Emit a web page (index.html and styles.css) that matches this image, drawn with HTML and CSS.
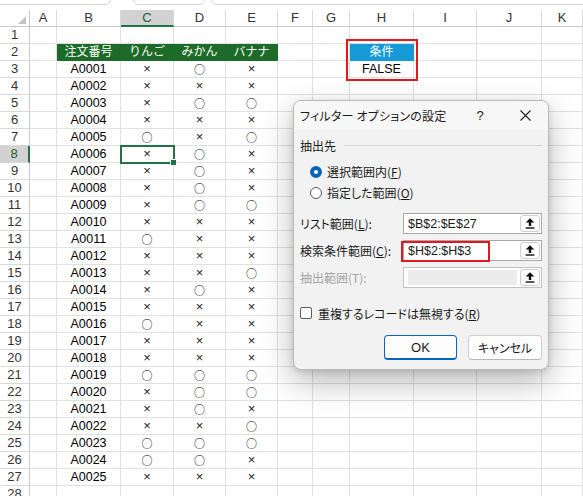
FILE: index.html
```html
<!DOCTYPE html>
<html lang="ja">
<head>
    <meta charset="UTF-8">
    <meta name="viewport" content="width=device-width, initial-scale=1.0">
    <title>フィルター オプションの設定</title>
    <link rel="stylesheet" href="styles.css">
</head>
<body>
<div class="app">

    <div class="topbar">
        <div class="box box-name"></div>
        <div class="box box-fx"></div>
        <div class="box box-formula"></div>
    </div>

    <div class="sheet" id="sheet"></div>

    <!-- 条件範囲の赤枠 -->
    <div class="criteria-mark"></div>
    <!-- 選択セル C8 -->
    <div class="selection"><span class="handle"></span></div>

    <div class="dialog">
        <div class="dlg-title">
            <span class="dlg-caption">フィルター オプションの設定</span>
            <span class="dlg-help">?</span>
            <span class="dlg-close">
                <svg width="11" height="11" viewBox="0 0 11 11"><path d="M0.5 0.5 L10.5 10.5 M10.5 0.5 L0.5 10.5" stroke="#222" stroke-width="1.1" fill="none"/></svg>
            </span>
        </div>

        <div class="dlg-body">
            <div class="group-head"><span>抽出先</span><span class="rule"></span></div>

            <div class="radios">
                <div class="radio-row"><span class="radio on"></span>選択範囲内(<u>F</u>)</div>
                <div class="radio-row"><span class="radio"></span>指定した範囲(<u>O</u>)</div>
            </div>

            <div class="fields">
                <div class="field-row">
                    <span class="field-label">リスト範囲(<u>L</u>):</span>
                    <div class="field">
                        <span class="field-text">$B$2:$E$27</span>
                        <span class="ref-btn">
                            <svg width="10" height="11" viewBox="0 0 10 11"><path d="M5 0.3 L9.3 4.6 H6.2 V8 H3.8 V4.6 H0.7 Z" fill="#111"/><rect x="0.6" y="9.3" width="8.8" height="1.4" fill="#111"/></svg>
                        </span>
                    </div>
                </div>
                <div class="field-row">
                    <span class="field-label">検索条件範囲(<u>C</u>):</span>
                    <div class="field">
                        <span class="field-text">$H$2:$H$3</span>
                        <span class="red-mark"></span>
                        <span class="ref-btn">
                            <svg width="10" height="11" viewBox="0 0 10 11"><path d="M5 0.3 L9.3 4.6 H6.2 V8 H3.8 V4.6 H0.7 Z" fill="#111"/><rect x="0.6" y="9.3" width="8.8" height="1.4" fill="#111"/></svg>
                        </span>
                    </div>
                </div>
                <div class="field-row disabled">
                    <span class="field-label">抽出範囲(T):</span>
                    <div class="field">
                        <span class="field-fill"></span>
                        <span class="ref-btn">
                            <svg width="10" height="11" viewBox="0 0 10 11"><path d="M5 0.3 L9.3 4.6 H6.2 V8 H3.8 V4.6 H0.7 Z" fill="#111"/><rect x="0.6" y="9.3" width="8.8" height="1.4" fill="#111"/></svg>
                        </span>
                    </div>
                </div>
            </div>

            <div class="check-row"><span class="check"></span>重複するレコードは無視する(<u>R</u>)</div>

            <div class="buttons">
                <button type="button" class="btn btn-ok">OK</button>
                <button type="button" class="btn">キャンセル</button>
            </div>
        </div>
    </div>

</div>

<script>
    const sheet = document.getElementById("sheet");
    const letters = ["", "A", "B", "C", "D", "E", "F", "G", "H", "I", "J", "K"];

    // りんご, みかん, バナナ  (o = ○, x = ×)
    const data = [
        "xox", "xxx", "xoo", "xxx", "oxo", "xox", "xox", "xox", "xoo", "xxx",
        "oxx", "xxx", "xxo", "xox", "xxx", "oxx", "xxx", "xxx", "ooo", "xoo",
        "xox", "xxo", "ooo", "oox", "xxx"
    ];
    const heads = ["注文番号", "りんご", "みかん", "バナナ"];

    function cell(text, cls) {
        const d = document.createElement("div");
        d.className = cls;
        d.textContent = text;
        sheet.appendChild(d);
    }

    letters.forEach((l, i) => {
        if (i == 0) {
            cell("", "corner");
        } else {
            cell(l, l == "C" ? "col-head active" : "col-head");
        }
    });

    for (let r = 1; r <= 28; r++) {
        cell(r, r == 8 ? "row-head active" : "row-head");
        for (let c = 1; c <= 11; c++) {
            let text = "";
            let cls = "cell";
            if (r == 2 && c >= 2 && c <= 5) {
                text = heads[c - 2];
                cls += " th";
            } else if (r >= 3 && r <= 27 && c == 2) {
                text = "A" + String(r - 2).padStart(4, "0");
                cls += " center";
            } else if (r >= 3 && r <= 27 && c >= 3 && c <= 5) {
                const m = data[r - 3][c - 3];
                text = m == "o" ? "○" : "×";
                cls += m == "o" ? " center maru" : " center batsu";
            } else if (r == 2 && c == 8) {
                text = "条件";
                cls += " cond";
            } else if (r == 3 && c == 8) {
                text = "FALSE";
                cls += " center";
            }
            cell(text, cls);
        }
    }
</script>
</body>
</html>
```

FILE: styles.css
```css
html, body {
    margin: 0;
    padding: 0;
}

body {
    background-color: #fff;
    font-family: "Liberation Sans", "Noto Sans CJK JP", sans-serif;
    color: #000;
}

.app {
    position: relative;
    width: 583px;
    height: 496px;
    overflow: hidden;
}

/* 上部の数式バー (一部のみ見える) */
.topbar {
    height: 10px;
    overflow: hidden;
    display: flex;
    gap: 22px;
    margin-left: -10px;
}

.box {
    height: 12px;
    margin-top: -9px;
    border: 1px solid #d6d6d6;
    border-radius: 5px;
    background-color: #fff;
}

.box-name {
    width: 119px;
}

.box-fx {
    width: 70px;
}

.box-formula {
    flex: 1;
    margin-left: -16px;
    margin-right: -10px;
}

/* シート */
.sheet {
    display: grid;
    grid-template-columns: 30px 27px 64px 53px 52px 52px 35px 37px 64px 63px 65px 41px;
    grid-auto-rows: 17px;
    font-size: 12.5px;
}

.sheet div {
    box-sizing: border-box;
    border-right: 1px solid #e1e1e1;
    border-bottom: 1px solid #e1e1e1;
    line-height: 16px;
    white-space: nowrap;
    overflow: hidden;
}

.corner {
    position: relative;
    border-right: 1px solid #c8c8c8 !important;
    border-bottom: 1px solid #c8c8c8 !important;
}

.corner::after {
    content: "";
    position: absolute;
    right: 3px;
    bottom: 2px;
    border-left: 8px solid transparent;
    border-bottom: 8px solid #c4c4c4;
}

.col-head {
    text-align: center;
    color: #333;
    font-size: 13px;
    border-right: 1px solid #d9d9d9 !important;
    border-bottom: 1px solid #c8c8c8 !important;
}

.col-head.active {
    background-color: #d2d2d2;
    color: #1b5e34;
    border-bottom: 2px solid #217346 !important;
}

.row-head {
    text-align: center;
    color: #333;
    font-size: 13px;
    border-right: 1px solid #c8c8c8 !important;
    border-bottom: 1px solid #d9d9d9 !important;
}

.row-head.active {
    background-color: #d2d2d2;
    color: #1b5e34;
    border-right: 2px solid #217346 !important;
}

.center {
    text-align: center;
}

.th {
    background-color: #1d6b28;
    color: #fff;
    text-align: center;
    font-size: 12px;
    border-right: 1px solid #1d6b28 !important;
    border-bottom: 1px solid #1d6b28 !important;
}

.cond {
    background-color: #159ad6;
    color: #fff;
    text-align: center;
    font-size: 12px;
    border-right: 1px solid #159ad6 !important;
    border-bottom: 1px solid #159ad6 !important;
}

.maru {
    font-family: "Noto Sans CJK JP", sans-serif;
    font-size: 11px;
}

.batsu {
    font-size: 13px;
    color: #222;
}

/* 重なり */
.criteria-mark {
    position: absolute;
    left: 346px;
    top: 39px;
    width: 72px;
    height: 42px;
    box-sizing: border-box;
    border: 2px solid #e5161e;
}

.selection {
    position: absolute;
    left: 120px;
    top: 145px;
    width: 55px;
    height: 19px;
    box-sizing: border-box;
    border: 2px solid #217346;
}

.selection .handle {
    position: absolute;
    right: -4px;
    bottom: -4px;
    width: 5px;
    height: 5px;
    background-color: #217346;
    border: 1px solid #fff;
}

/* ダイアログ */
.dialog {
    position: absolute;
    left: 293px;
    top: 100px;
    width: 256px;
    height: 270px;
    box-sizing: border-box;
    border: 1px solid #b9b9b9;
    border-radius: 8px;
    background-color: #f2f2f2;
    overflow: hidden;
    font-family: "Noto Sans CJK JP", sans-serif;
    font-feature-settings: "palt";
    font-size: 12px;
    color: #1a1a1a;
    box-shadow: 0 12px 32px rgba(0, 0, 0, 0.28), 0 2px 6px rgba(0, 0, 0, 0.12);
}

.dlg-title {
    height: 29px;
    display: flex;
    align-items: center;
    padding-left: 6px;
    background-color: #f7f7f7;
}

.dlg-caption {
    flex: 1;
    letter-spacing: 0.2px;
}

.dlg-help {
    width: 20px;
    text-align: center;
    font-family: "Liberation Sans", sans-serif;
    font-size: 13px;
    margin-right: 30px;
}

.dlg-close {
    width: 11px;
    height: 11px;
    margin-right: 17px;
    display: flex;
}

.dlg-body {
    padding: 0 6px;
}

.group-head {
    display: flex;
    align-items: center;
    gap: 8px;
    height: 16px;
    margin-top: 7px;
}

.group-head .rule {
    flex: 1;
    height: 1px;
    background-color: #d5d5d5;
}

.radios {
    margin-top: 8px;
}

.radio-row {
    display: flex;
    align-items: center;
    height: 21px;
    padding-left: 10px;
}

.radio {
    width: 12px;
    height: 12px;
    box-sizing: border-box;
    border: 1px solid #5a5a5a;
    border-radius: 50%;
    margin-right: 5px;
    background-color: #fff;
}

.radio.on {
    border: 4px solid #0a64be;
    background-color: #fff;
}

u {
    text-decoration: underline;
    text-underline-offset: 1px;
}

.fields {
    margin-top: 10px;
    display: flex;
    flex-direction: column;
    gap: 6px;
}

.field-row {
    display: flex;
    align-items: center;
    height: 21px;
}

.field-row.disabled .field-label {
    color: #a3a3a3;
}

.field-label {
    flex: 1;
}

.field {
    position: relative;
    width: 139px;
    height: 21px;
    box-sizing: border-box;
    border: 1px solid #a8a8a8;
    background-color: #fff;
    display: flex;
    align-items: center;
    padding-left: 4px;
}

.field-row.disabled .field {
    border-color: #c2c2c2;
}

.field-text {
    flex: 1;
    font-family: "Liberation Sans", sans-serif;
    font-size: 12.5px;
}

.field-fill {
    flex: 1;
    height: 15px;
    background-color: #ececec;
    margin-right: 3px;
}

.red-mark {
    position: absolute;
    left: -3px;
    top: 0;
    width: 89px;
    height: 21px;
    box-sizing: border-box;
    border: 2px solid #e5161e;
}

.ref-btn {
    width: 20px;
    height: 17px;
    box-sizing: border-box;
    border: 1px solid #cfcfcf;
    border-radius: 3px;
    background-color: #fdfdfd;
    display: flex;
    align-items: center;
    justify-content: center;
    margin-right: 1px;
}

.check-row {
    display: flex;
    align-items: center;
    height: 16px;
    margin-top: 17px;
}

.check {
    width: 12px;
    height: 12px;
    box-sizing: border-box;
    border: 1px solid #5a5a5a;
    border-radius: 2px;
    background-color: #fff;
    margin-right: 6px;
}

.buttons {
    display: flex;
    justify-content: flex-end;
    gap: 11px;
    margin-top: 14px;
}

.btn {
    width: 74px;
    height: 25px;
    box-sizing: border-box;
    border: 1px solid #d0d0d0;
    border-bottom-color: #b8b8b8;
    border-radius: 4px;
    background-color: #fdfdfd;
    font-family: "Noto Sans CJK JP", sans-serif;
    font-feature-settings: "palt";
    font-size: 12px;
    color: #1a1a1a;
    padding: 0;
}

.btn-ok {
    width: 73px;
    font-family: "Liberation Sans", sans-serif;
    font-size: 13px;
    border: 1px solid #0a64be;
    border-bottom: 2px solid #0a64be;
}
```
